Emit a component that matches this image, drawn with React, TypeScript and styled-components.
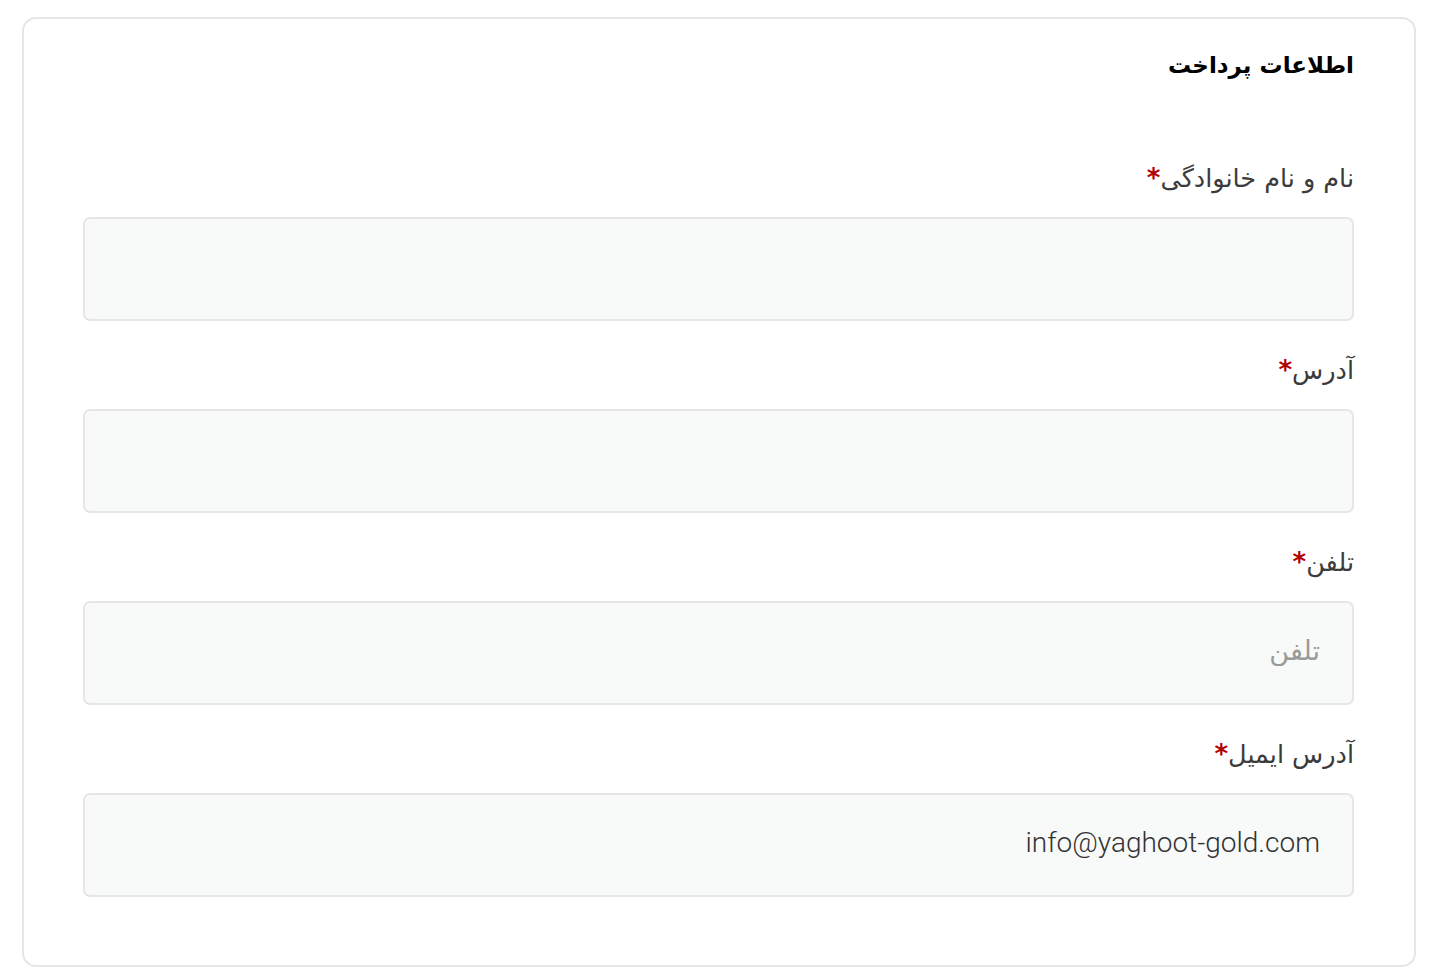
import React from "react";
import styled, { createGlobalStyle } from "styled-components";

const GlobalStyle = createGlobalStyle`
  html, body {
    margin: 0;
    padding: 0;
    background: #ffffff;
  }
  body {
    font-family: "Roboto", "DejaVu Sans", sans-serif;
  }
`;

const Page = styled.div`
  padding: 17px 17px 14px 22px;
`;

const Card = styled.form`
  direction: rtl;
  border: 2px solid #e6e6e6;
  border-radius: 14px;
  padding: 28px 60px 68px 59px;
  display: flex;
  flex-direction: column;
`;

const Title = styled.h3`
  margin: 0 0 75px 0;
  font-family: "DejaVu Sans", sans-serif;
  font-size: 23px;
  line-height: 36px;
  font-weight: 700;
  color: #000;
`;

const Fields = styled.div`
  display: flex;
  flex-direction: column;
  gap: 29px;
`;

const Field = styled.div`
  display: flex;
  flex-direction: column;
  gap: 19px;
`;

const Label = styled.label`
  display: block;
  height: 40px;
  font-family: "DejaVu Sans", sans-serif;
  font-size: 25.5px;
  line-height: 40px;
  color: #3b3b3b;
`;

const Required = styled.span`
  color: #b30000;
  font-weight: 700;
  font-size: 26px;
  line-height: 1;
`;

const Input = styled.input<{ $ltr?: boolean }>`
  box-sizing: border-box;
  width: 100%;
  height: 104px;
  border: 2px solid #e6e6e6;
  border-radius: 7px;
  background: #f8f9f9;
  padding: 0 32px 6px 32px;
  font-family: "Roboto", "DejaVu Sans", sans-serif;
  font-size: 28px;
  font-weight: 300;
  color: #333;
  direction: ${(p) => (p.$ltr ? "ltr" : "rtl")};
  text-align: right;
  outline: none;

  &::placeholder {
    color: #9a9a9a;
    font-family: "DejaVu Sans", sans-serif;
    font-weight: 400;
    font-size: 27px;
  }
`;

const fields = [
  { label: "نام و نام خانوادگی", placeholder: "", value: "" },
  { label: "آدرس", placeholder: "", value: "" },
  { label: "تلفن", placeholder: "تلفن", value: "" },
  { label: "آدرس ایمیل", placeholder: "", value: "info@yaghoot-gold.com", ltr: true },
];

export default function App() {
  return (
    <Page>
      <GlobalStyle />
      <Card onSubmit={(e) => e.preventDefault()}>
        <Title>اطلاعات پرداخت</Title>
        <Fields>
          {fields.map((f) => (
            <Field key={f.label}>
              <Label>
                {f.label}
                <Required>*</Required>
              </Label>
              <Input
                $ltr={f.ltr}
                placeholder={f.placeholder}
                defaultValue={f.value}
              />
            </Field>
          ))}
        </Fields>
      </Card>
    </Page>
  );
}
